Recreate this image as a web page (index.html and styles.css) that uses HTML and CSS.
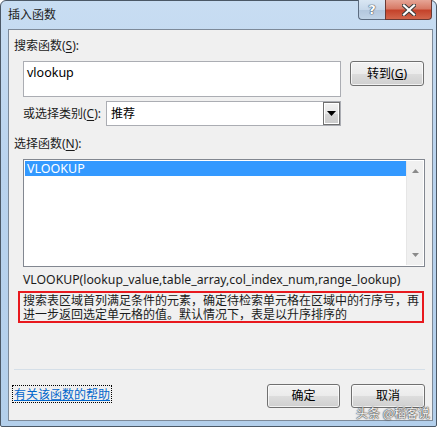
FILE: index.html
```html
<!DOCTYPE html>
<html lang="zh-CN">
<head>
<meta charset="utf-8">
<title>插入函数</title>
<link rel="stylesheet" href="styles.css">
</head>
<body>
<div class="window">
  <div class="titlebar">
    <span class="title">插入函数</span>
    <div class="caption-btns">
      <div class="cbtn help-btn"><span>?</span></div>
      <div class="cbtn close-btn">
        <svg width="14" height="12" viewBox="0 0 14 12"><path d="M2 1.5 L12 10.5 M12 1.5 L2 10.5" stroke="#3b3b3b" stroke-width="4.2" stroke-linecap="square"/><path d="M2 1.5 L12 10.5 M12 1.5 L2 10.5" stroke="#ffffff" stroke-width="2.2" stroke-linecap="square"/></svg>
      </div>
    </div>
  </div>
  <div class="client">
    <div class="label top-label">搜索函数(<u>S</u>):</div>
    <div class="search-row">
      <div class="textbox">vlookup</div>
      <div class="btn go-btn">转到(<u>G</u>)</div>
    </div>
    <div class="cat-row">
      <span class="label">或选择类别(<u>C</u>):</span>
      <div class="select">
        <span class="select-value">推荐</span>
        <div class="drop-btn"><svg width="9" height="5" viewBox="0 0 9 5"><path d="M0 0 H9 L4.5 5 Z" fill="#000"/></svg></div>
      </div>
    </div>
    <div class="label sel-label">选择函数(<u>N</u>):</div>
    <div class="listbox">
      <div class="list-items">
        <div class="item selected">VLOOKUP</div>
      </div>
      <div class="scrollbar">
        <svg width="7" height="4" viewBox="0 0 7 4"><path d="M0 4 H7 L3.5 0 Z" fill="#8a8a8a"/></svg>
        <svg width="7" height="4" viewBox="0 0 7 4"><path d="M0 0 H7 L3.5 4 Z" fill="#8a8a8a"/></svg>
      </div>
    </div>
    <div class="signature">VLOOKUP(lookup_value,table_array,col_index_num,range_lookup)</div>
    <div class="desc">搜索表区域首列满足条件的元素，确定待检索单元格在区域中的行序号，再进一步返回选定单元格的值。默认情况下，表是以升序排序的</div>
    <div class="separator"></div>
    <div class="bottom-row">
      <a class="help-link">有关该函数的帮助</a>
      <div class="btn ok-btn">确定</div>
      <div class="btn cancel-btn">取消</div>
    </div>
    <div class="watermark">头条 @稻客说</div>
  </div>
</div>
</body>
</html>
```
FILE: styles.css
```css
* { box-sizing: border-box; }
html, body { margin: 0; padding: 0; background: #ffffff; }
body {
  font-family: "Noto Sans", "Noto Sans CJK SC", sans-serif;
  font-size: 12px;
  color: #000;
}
.window {
  width: 437px;
  height: 427px;
  border: 1px solid #4b5866;
  border-radius: 6px 6px 2px 2px;
  background: linear-gradient(180deg, #c8ddf2 0%, #b9d3ee 40%, #b3cfeb 100%);
  padding: 0 3px 5px 7px;
  display: flex;
  flex-direction: column;
}
.titlebar {
  height: 28px;
  display: flex;
  align-items: flex-start;
  flex-shrink: 0;
}
.title {
  font-family: "Noto Sans CJK SC", sans-serif;
  font-size: 12px;
  line-height: 14px;
  margin-top: 6px;
  color: #1e1e1e;
}
.caption-btns {
  margin-left: auto;
  margin-right: 1px;
  margin-top: -1px;
  display: flex;
}
.cbtn {
  height: 20px;
  border: 1px solid #5c6c80;
  border-top: none;
  display: flex;
  align-items: center;
  justify-content: center;
}
.help-btn {
  width: 27px;
  border-radius: 0 0 0 4px;
  background: linear-gradient(180deg, #d9e6f3 0%, #c7d8ea 50%, #b2c6dc 51%, #c0d3e6 100%);
  border-right: none;
}
.help-btn span {
  font-family: "DejaVu Sans", sans-serif;
  font-weight: bold;
  font-size: 13px;
  color: #fff;
  line-height: 14px;
  text-shadow: 0 0 1px #3a4a5c, 0 0 1px #3a4a5c, 0 0 1px #3a4a5c;
}
.close-btn {
  width: 47px;
  border-radius: 0 0 4px 0;
  background: linear-gradient(180deg, #e6a596 0%, #d77a66 45%, #c4432b 55%, #d2664c 100%);
  border-color: #6a3a34;
}
.client {
  flex: 1;
  position: relative;
  border: 1px solid #7d8a99;
  background: #f0f0f0;
  padding: 9px 6px 0 5px;
  display: flex;
  flex-direction: column;
  font-family: "Noto Sans", "Noto Sans CJK SC", sans-serif;
}
.label {
  line-height: 14px;
  color: #1b1b1b;
}
.label u { text-decoration-thickness: 1px; text-underline-offset: 2px; }
.search-row {
  display: flex;
  align-items: flex-start;
  margin-top: 8px;
  margin-left: 9px;
}
.textbox {
  width: 318px;
  height: 36px;
  background: #fff;
  border: 1px solid #abadb3;
  padding: 3px 3px 0 3px;
  line-height: 16px;
  font-size: 12.5px;
}
.btn {
  height: 25px;
  border: 1px solid #707070;
  border-radius: 3px;
  background: linear-gradient(180deg, #f2f2f2 0%, #ebebeb 50%, #dddddd 51%, #cfcfcf 100%);
  box-shadow: inset 0 0 0 1px rgba(255,255,255,0.7);
  display: flex;
  align-items: center;
  justify-content: center;
  line-height: 14px;
  color: #000;
}
.go-btn { width: 74px; margin-left: 9px; }
.cat-row {
  display: flex;
  align-items: center;
  margin-top: 4px;
  margin-left: 9px;
}
.select {
  width: 235px;
  height: 25px;
  margin-left: 5px;
  background: #fff;
  border: 1px solid #abadb3;
  display: flex;
  align-items: stretch;
}
.select-value {
  flex: 1;
  padding-left: 4px;
  line-height: 23px;
}
.drop-btn {
  width: 17px;
  border: 1px solid #707070;
  outline: 1px solid #fff;
  outline-offset: -2px;
  background: linear-gradient(180deg, #f2f2f2 0%, #e6e6e6 50%, #d6d6d6 51%, #cbcbcb 100%);
  display: flex;
  align-items: center;
  justify-content: center;
}
.sel-label { margin-top: 11px; }
.listbox {
  margin-top: 8px;
  margin-left: 9px;
  width: 402px;
  height: 108px;
  background: #fff;
  border: 1px solid #828790;
  padding: 1px;
  display: flex;
}
.list-items { flex: 1; }
.item {
  height: 15px;
  line-height: 15px;
  padding-left: 2px;
  font-size: 12.5px;
}
.item.selected {
  background: #3399ff;
  color: #fff;
}
.scrollbar {
  width: 17px;
  background: #f0f0f0;
  border-left: 1px solid #e6e6e6;
  display: flex;
  flex-direction: column;
  align-items: center;
  justify-content: space-between;
  padding: 8px 0 8px 0;
}
.signature {
  margin-top: 6px;
  margin-left: 9px;
  line-height: 14px;
  font-size: 12.25px;
  white-space: nowrap;
  color: #1b1b1b;
}
.desc {
  margin-top: 4px;
  margin-left: 4px;
  width: 406px;
  height: 32px;
  border: 2px solid #e8191e;
  padding: 0 2px 0 3px;
  font-family: "Noto Sans CJK SC", sans-serif;
  line-height: 14px;
  color: #1b1b1b;
}
.separator {
  margin-top: 46px;
  height: 1px;
  background: #d5dfe8;
  width: 411px;
}
.bottom-row {
  display: flex;
  align-items: flex-start;
  margin-top: 14px;
}
.help-link {
  margin-top: 1px;
  margin-left: -2px;
  padding: 0 1px;
  height: 18px;
  line-height: 16px;
  border: 1px dotted #000;
  color: #0066cc;
  text-decoration: underline;
  font-family: "Noto Sans CJK SC", sans-serif;
}
.ok-btn { width: 73px; margin-left: auto; height: 24px; }
.cancel-btn { width: 74px; margin-left: 11px; margin-right: 1px; height: 24px; }
.watermark {
  position: absolute;
  right: 2px;
  bottom: 0;
  font-family: "Noto Sans CJK SC", sans-serif;
  font-size: 12px;
  line-height: 14px;
  color: rgba(255,255,255,0.95);
  text-shadow: 0 0 1px #444, 0 0 2px #555, 0 0 1px #444;
}
```
